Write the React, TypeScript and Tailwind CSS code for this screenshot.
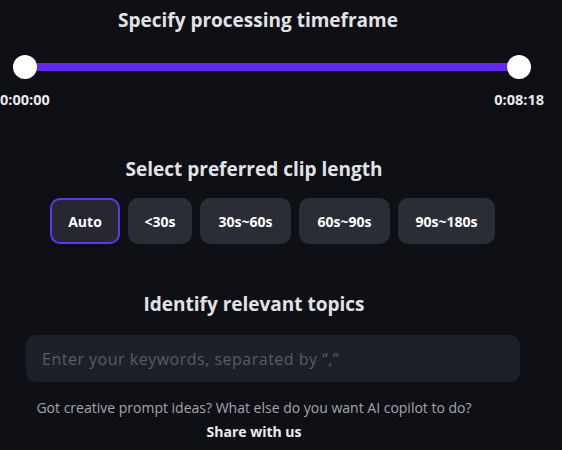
const clips = [
  { label: "Auto", w: "w-[70px]" },
  { label: "<30s", w: "w-[64px]" },
  { label: "30s~60s", w: "w-[91px]" },
  { label: "60s~90s", w: "w-[91px]" },
  { label: "90s~180s", w: "w-[97px]" },
];

export default function App() {
  return (
    <div className="w-[562px] h-[450px] overflow-hidden bg-[#0f1015] font-['Open_Sans',sans-serif] text-[#e4e4e8]">
      <h2 className="mt-[6px] w-[516px] text-center text-[19px] leading-[28px] font-bold text-[#e2e2e6]">
        Specify processing timeframe
      </h2>

      <div className="relative mt-[21px] ml-[13px] w-[518px] h-6">
        <div className="absolute left-[12px] right-[12px] top-[8px] h-2 bg-[#6129f0]" />
        <div className="absolute left-0 top-0 w-6 h-6 rounded-full bg-white" />
        <div className="absolute right-0 top-0 w-6 h-6 rounded-full bg-white" />
      </div>

      <div className="mt-[12px] w-[544px] flex justify-between text-[14.5px] leading-[18px] font-bold text-[#e8e8ec]">
        <span>0:00:00</span>
        <span>0:08:18</span>
      </div>

      <h2 className="mt-[46px] w-[508px] text-center text-[19px] leading-[28px] font-bold text-[#e2e2e6]">
        Select preferred clip length
      </h2>

      <div className="mt-[15px] ml-[50px] flex gap-2">
        {clips.map((c, i) => (
          <button
            key={c.label}
            className={
              i === 0
                ? `${c.w} h-[46px] flex items-center justify-center rounded-[10px] border-2 border-[#6434ee] bg-[#262731] text-[14px] font-bold text-white`
                : `${c.w} h-[46px] flex items-center justify-center rounded-[10px] bg-[#2a2c36] text-[14px] font-bold text-white`
            }
          >
            {c.label}
          </button>
        ))}
      </div>

      <h2 className="mt-[46px] w-[508px] text-center text-[19px] leading-[28px] font-bold text-[#e2e2e6]">
        Identify relevant topics
      </h2>

      <div className="mt-[17px] ml-[26px] w-[494px] h-[47px] rounded-[10px] bg-[#1e2028] flex items-center px-4">
        <input
          className="w-full bg-transparent outline-none text-[16px] tracking-[0.5px] text-[#e4e4e8] placeholder:text-[#595b64]"
          placeholder="Enter your keywords, separated by “,”"
        />
      </div>

      <p className="mt-[16px] w-[508px] text-center text-[14px] leading-[20px] text-[#a4a5ac]">
        Got creative prompt ideas? What else do you want AI copilot to do?
      </p>
      <p className="mt-[4px] w-[508px] text-center text-[14px] leading-[20px] font-bold text-[#ececf0]">
        Share with us
      </p>
    </div>
  );
}
